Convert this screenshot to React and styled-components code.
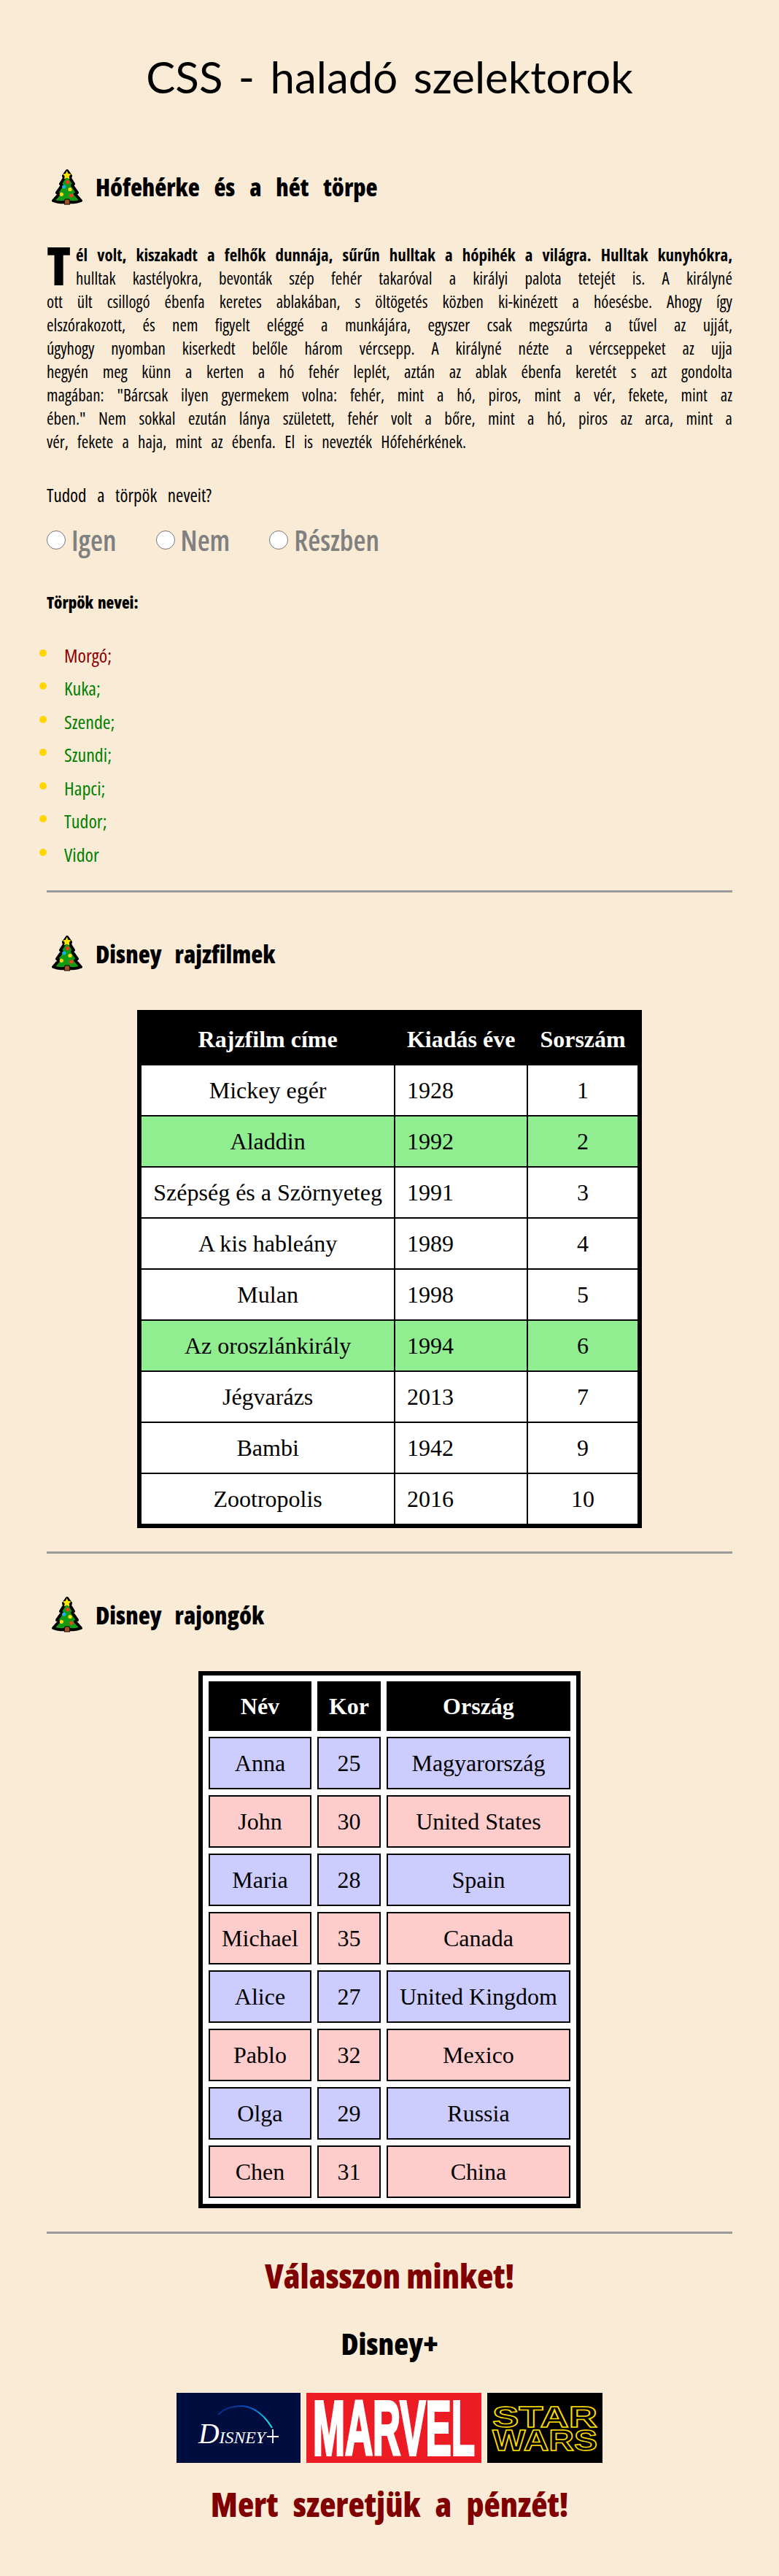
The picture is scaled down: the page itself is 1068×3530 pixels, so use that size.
import React from "react";
import styled, { createGlobalStyle } from "styled-components";

const hand = `"Open Sans", "Liberation Sans", sans-serif`;
const serif = `"Liberation Serif", "Times New Roman", serif`;

const Global = createGlobalStyle`
  html, body { margin: 0; padding: 0; background: #faebd7; }
  body { font-family: ${hand}; font-stretch: 75%; color: #000; }
`;

const Page = styled.main`
  padding: 75px 64px 67px;
`;
const Title = styled.h1`
  margin: 0;
  font: 400 60px/60px Lato, sans-serif;
  text-align: center;
  word-spacing: 6px;
`;
const Heading = styled.h2`
  display: flex;
  align-items: center;
  gap: 17px;
  height: 53px;
  margin: ${(p) => p.$top}px 0 50px 6px;
  font-family: ${hand};
  font-size: 33px;
  font-weight: 800;
  font-stretch: 75%;
  line-height: 53px;
  word-spacing: ${(p) => p.$spacing}px;
`;
const TreeSvg = styled.svg`
  width: 44px;
  height: 54px;
  flex: none;
`;
const Story = styled.p`
  margin: 0;
  font-size: 23px;
  line-height: 32px;
`;
const DropCap = styled.span`
  float: left;
  width: 40px;
  height: 64px;
  font-family: ${hand};
  font-size: 72px;
  font-weight: 800;
  font-stretch: 75%;
  line-height: 60px;
`;
const Line = styled.span`
  display: block;
  text-align: justify;
  text-align-last: ${(p) => (p.$last ? "left" : "justify")};
  font-weight: ${(p) => (p.$bold ? 700 : 400)};
  white-space: nowrap;
  word-spacing: ${(p) => (p.$last ? 8 : 0)}px;
`;
const Question = styled.p`
  margin: 41px 0 26px;
  font-size: 25px;
  line-height: 32px;
  word-spacing: 10px;
`;
const RadioRow = styled.form`
  display: flex;
  align-items: center;
  gap: 54px;
  height: 40px;
`;
const RadioLabel = styled.label`
  display: flex;
  align-items: center;
  gap: 8px;
  color: #808080;
  font-family: ${hand};
  font-size: 39px;
  font-weight: 600;
  font-stretch: 75%;
  line-height: 40px;
`;
const Radio = styled.input`
  width: 26px;
  height: 26px;
  margin: 0;
`;
const ListTitle = styled.p`
  margin: 49px 0 34px;
  font-size: 22px;
  font-weight: 800;
  line-height: 32px;
  word-spacing: 2px;
`;
const Dwarfs = styled.ul`
  margin: 0 0 0 -10px;
  padding: 0;
  list-style: none;
`;
const Dwarf = styled.li`
  display: flex;
  align-items: center;
  height: 45.5px;
  font-size: 26px;
  color: ${(p) => (p.$angry ? "#8b0000" : "#008000")};
  &::before {
    content: "";
    width: 10px;
    height: 10px;
    margin: -6px 24px 0 0;
    border-radius: 50%;
    background: #ffd700;
  }
`;
const Rule = styled.hr`
  margin: ${(p) => p.$top}px 0 0;
  height: 3px;
  border: 0;
  background: #9a9a9a;
`;
const MovieTable = styled.table`
  margin: 0 auto;
  border: 6px solid #000;
  border-collapse: collapse;
  background: #fff;
  font: 400 32px/36px ${serif};
  th { background: #000; color: #fff; padding: 16px; border: 2px solid #000; }
  td { padding: 16px; border: 2px solid #000; }
`;
const MovieRow = styled.tr`
  background: ${(p) => (p.$hit ? "#90ee90" : "#fff")};
`;
const MovieName = styled.td`
  text-align: center;
`;
const MovieYear = styled.td`
  text-align: left;
`;
const MovieNo = styled.td`
  text-align: center;
`;
const FanTable = styled.table`
  margin: 0 auto;
  border: 6px solid #000;
  border-spacing: 8px;
  background: #fff;
  font: 400 32px/36px ${serif};
  th { background: #000; color: #fff; padding: 16px; }
  td { padding: 16px; border: 2px solid #000; text-align: center; }
`;
const FanRow = styled.tr`
  background: ${(p) => (p.$odd ? "#ccccff" : "#ffcccc")};
`;
const Closing = styled.p`
  margin: ${(p) => p.$top}px 0 0;
  text-align: center;
  font-family: ${hand};
  font-size: ${(p) => p.$size}px;
  font-weight: 800;
  font-stretch: 75%;
  line-height: 50px;
  color: ${(p) => p.$color};
  word-spacing: ${(p) => p.$spacing}px;
`;
const Logos = styled.div`
  display: flex;
  justify-content: center;
  gap: 8px;
  margin-top: 43px;
  height: 96px;
`;
const LogoSvg = styled.svg`
  display: block;
  height: 96px;
`;

const Tree = () => (
  <TreeSvg viewBox="0 0 44 54" aria-hidden="true">
    <path d="M22 4 L27 11 L26 14 L31 22 L29 24 L36 34 L33 36 L41 45 Q34 48 27 47 L17 47 Q10 48 3 45 L11 36 L8 34 L15 24 L13 22 L18 14 L17 11 Z" fill="#159a15" stroke="#000" strokeWidth="4" strokeLinejoin="round" />
    <path d="M18 50 L19 43 L25 43 L26 50 Z" fill="#a5501f" stroke="#000" strokeWidth="1" />
    <path d="M21.7 4 L23.6 8 L27.5 8.6 L24.7 11.4 L25.4 15.4 L21.7 13.5 L18 15.4 L18.7 11.4 L15.9 8.6 L19.8 8 Z" fill="#ffe600" />
    <circle cx="22.7" cy="19.5" r="2.6" fill="#f0401e" />
    <circle cx="17.7" cy="26" r="2.6" fill="#14b4e6" />
    <circle cx="26" cy="29.5" r="2.6" fill="#ffdc14" />
    <circle cx="14.3" cy="36.3" r="2.6" fill="#ffdc14" />
    <circle cx="27.7" cy="38" r="2.6" fill="#f0401e" />
  </TreeSvg>
);

const DisneyLogo = () => (
  <LogoSvg viewBox="0 0 170 96" width="170" role="img" aria-label="Disney+">
    <defs>
      <linearGradient id="arc" x1="0" x2="1" y1="0" y2="0.6">
        <stop offset="0" stopColor="#011a66" />
        <stop offset="0.5" stopColor="#0a5ac8" />
        <stop offset="1" stopColor="#19e0ee" />
      </linearGradient>
    </defs>
    <rect width="170" height="96" fill="#000d3f" />
    <path d="M57 30 Q68 18 90 18 Q114 20 131 48" fill="none" stroke="url(#arc)" strokeWidth="2" />
    <text x="30" y="69" fill="#fff" fontFamily="Liberation Serif" fontStyle="italic" textLength="92" lengthAdjust="spacingAndGlyphs">
      <tspan fontSize="40">D</tspan>
      <tspan fontSize="24">ISNEY</tspan>
    </text>
    <path d="M124 60 H140 M132 50 V69" stroke="#fff" strokeWidth="1.8" />
  </LogoSvg>
);

const MarvelLogo = () => (
  <LogoSvg viewBox="0 0 240 96" width="240" role="img" aria-label="Marvel">
    <rect width="240" height="96" fill="#ed1b24" />
    <text x="9" y="85" fill="#fff" stroke="#fff" strokeWidth="4" fontFamily="Liberation Sans" fontWeight="700" fontSize="106" textLength="222" lengthAdjust="spacingAndGlyphs">MARVEL</text>
  </LogoSvg>
);

const StarWarsLogo = () => (
  <LogoSvg viewBox="0 0 158 96" width="158" role="img" aria-label="Star Wars">
    <rect width="158" height="96" fill="#000" />
    <g fill="#000" stroke="#ffdf00" strokeWidth="1.5" fontFamily="Liberation Sans" fontWeight="700" fontSize="41">
      <text x="7" y="47" textLength="144" lengthAdjust="spacingAndGlyphs">STAR</text>
      <text x="7" y="79" textLength="144" lengthAdjust="spacingAndGlyphs">WARS</text>
    </g>
  </LogoSvg>
);

const storyLines = [
  "él volt, kiszakadt a felhők dunnája, sűrűn hulltak a hópihék a világra. Hulltak kunyhókra,",
  "hulltak kastélyokra, bevonták szép fehér takaróval a királyi palota tetejét is. A királyné",
  "ott ült csillogó ébenfa keretes ablakában, s öltögetés közben ki-kinézett a hóesésbe. Ahogy így",
  "elszórakozott, és nem figyelt eléggé a munkájára, egyszer csak megszúrta a tűvel az ujját,",
  "úgyhogy nyomban kiserkedt belőle három vércsepp. A királyné nézte a vércseppeket az ujja",
  "hegyén meg künn a kerten a hó fehér leplét, aztán az ablak ébenfa keretét s azt gondolta",
  "magában: \"Bárcsak ilyen gyermekem volna: fehér, mint a hó, piros, mint a vér, fekete, mint az",
  "ében.\" Nem sokkal ezután lánya született, fehér volt a bőre, mint a hó, piros az arca, mint a",
  "vér, fekete a haja, mint az ébenfa. El is nevezték Hófehérkének.",
];
const dwarfs = ["Morgó;", "Kuka;", "Szende;", "Szundi;", "Hapci;", "Tudor;", "Vidor"];
const movies = [
  ["Mickey egér", 1928, 1],
  ["Aladdin", 1992, 2, true],
  ["Szépség és a Szörnyeteg", 1991, 3],
  ["A kis hableány", 1989, 4],
  ["Mulan", 1998, 5],
  ["Az oroszlánkirály", 1994, 6, true],
  ["Jégvarázs", 2013, 7],
  ["Bambi", 1942, 9],
  ["Zootropolis", 2016, 10],
];
const fans = [
  ["Anna", 25, "Magyarország"],
  ["John", 30, "United States"],
  ["Maria", 28, "Spain"],
  ["Michael", 35, "Canada"],
  ["Alice", 27, "United Kingdom"],
  ["Pablo", 32, "Mexico"],
  ["Olga", 29, "Russia"],
  ["Chen", 31, "China"],
];

export default function App() {
  return (
    <Page>
      <Global />
      <Title>CSS - haladó szelektorok</Title>

      <Heading $top={95} $spacing={14}><Tree />Hófehérke és a hét törpe</Heading>
      <Story>
        <DropCap>T</DropCap>
        {storyLines.map((l, i) => (
          <Line key={i} $bold={i === 0} $last={i === storyLines.length - 1}>{l}</Line>
        ))}
      </Story>
      <Question>Tudod a törpök neveit?</Question>
      <RadioRow>
        <RadioLabel><Radio type="radio" name="q" />Igen</RadioLabel>
        <RadioLabel><Radio type="radio" name="q" />Nem</RadioLabel>
        <RadioLabel><Radio type="radio" name="q" />Részben</RadioLabel>
      </RadioRow>
      <ListTitle>Törpök nevei:</ListTitle>
      <Dwarfs>
        {dwarfs.map((d, i) => <Dwarf key={d} $angry={i === 0}>{d}</Dwarf>)}
      </Dwarfs>
      <Rule $top={26} />

      <Heading $top={58} $spacing={12}><Tree />Disney rajzfilmek</Heading>
      <MovieTable>
        <thead>
          <tr><th>Rajzfilm címe</th><th>Kiadás éve</th><th>Sorszám</th></tr>
        </thead>
        <tbody>
          {movies.map(([name, year, no, hit]) => (
            <MovieRow key={name} $hit={hit}>
              <MovieName>{name}</MovieName>
              <MovieYear>{year}</MovieYear>
              <MovieNo>{no}</MovieNo>
            </MovieRow>
          ))}
        </tbody>
      </MovieTable>
      <Rule $top={32} />

      <Heading $top={58} $spacing={12}><Tree />Disney rajongók</Heading>
      <FanTable>
        <thead>
          <tr><th>Név</th><th>Kor</th><th>Ország</th></tr>
        </thead>
        <tbody>
          {fans.map(([name, age, country], i) => (
            <FanRow key={name} $odd={i % 2 === 0}>
              <td>{name}</td><td>{age}</td><td>{country}</td>
            </FanRow>
          ))}
        </tbody>
      </FanTable>
      <Rule $top={32} />

      <Closing $top={32} $size={46} $color="#800000" $spacing={0}>Válasszon minket!</Closing>
      <Closing $top={43} $size={41} $color="#000" $spacing={0}>Disney+</Closing>
      <Logos>
        <DisneyLogo />
        <MarvelLogo />
        <StarWarsLogo />
      </Logos>
      <Closing $top={31} $size={46} $color="#800000" $spacing={12}>Mert szeretjük a pénzét!</Closing>
    </Page>
  );
}
